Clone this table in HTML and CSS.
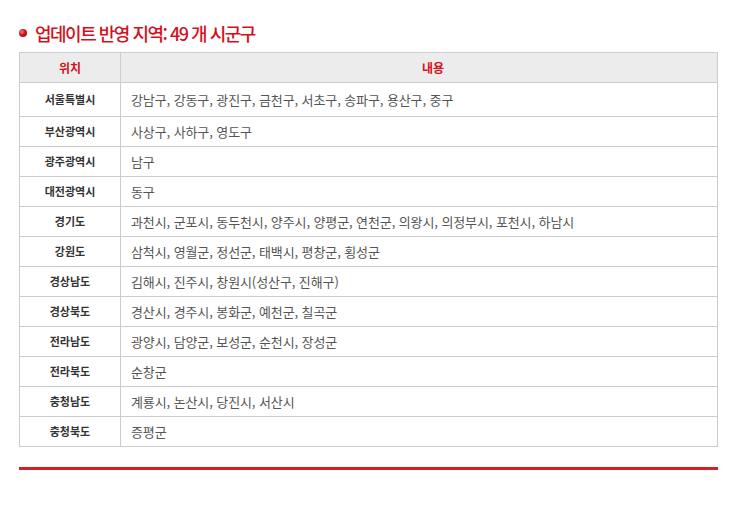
FILE: index.html
```html
<!DOCTYPE html>
<html lang="ko">
<head>
<meta charset="utf-8">
<link rel="stylesheet" href="styles.css">
</head>
<body>
<div class="wrap">
  <h2 class="title"><span class="dot"></span>업데이트 반영 지역: 49 개 시군구</h2>
  <table class="areas">
    <thead>
      <tr><th class="col-loc">위치</th><th class="col-desc">내용</th></tr>
    </thead>
    <tbody>
      <tr class="first"><td class="loc">서울특별시</td><td class="desc">강남구, 강동구, 광진구, 금천구, 서초구, 송파구, 용산구, 중구</td></tr>
      <tr><td class="loc">부산광역시</td><td class="desc">사상구, 사하구, 영도구</td></tr>
      <tr><td class="loc">광주광역시</td><td class="desc">남구</td></tr>
      <tr><td class="loc">대전광역시</td><td class="desc">동구</td></tr>
      <tr><td class="loc">경기도</td><td class="desc">과천시, 군포시, 동두천시, 양주시, 양평군, 연천군, 의왕시, 의정부시, 포천시, 하남시</td></tr>
      <tr><td class="loc">강원도</td><td class="desc">삼척시, 영월군, 정선군, 태백시, 평창군, 횡성군</td></tr>
      <tr><td class="loc">경상남도</td><td class="desc">김해시, 진주시, 창원시(성산구, 진해구)</td></tr>
      <tr><td class="loc">경상북도</td><td class="desc">경산시, 경주시, 봉화군, 예천군, 칠곡군</td></tr>
      <tr><td class="loc">전라남도</td><td class="desc">광양시, 담양군, 보성군, 순천시, 장성군</td></tr>
      <tr><td class="loc">전라북도</td><td class="desc">순창군</td></tr>
      <tr><td class="loc">충청남도</td><td class="desc">계룡시, 논산시, 당진시, 서산시</td></tr>
      <tr><td class="loc">충청북도</td><td class="desc">증평군</td></tr>
    </tbody>
  </table>
  <div class="endbar"></div>
</div>
</body>
</html>
```

FILE: styles.css
```css
html, body {
  margin: 0;
  padding: 0;
  background: #ffffff;
}

.wrap {
  width: 699px;
  padding: 22px 0 0 19px;
  font-family: "Noto Sans CJK KR", "Noto Sans", sans-serif;
}

.title {
  display: flex;
  align-items: center;
  margin: 0;
  height: 22px;
  font-size: 18px;
  line-height: 22px;
  font-weight: 500;
  letter-spacing: -1.5px;
  color: #d3101c;
}

.dot {
  display: inline-block;
  width: 8px;
  height: 8px;
  border-radius: 50%;
  margin-right: 8px;
  background: radial-gradient(circle at 35% 35%, #f27a7a 0%, #d3101c 45%, #8e0a10 100%);
}

.areas {
  margin-top: 8px;
  width: 699px;
  border-collapse: collapse;
  table-layout: fixed;
}

.areas th,
.areas td {
  border: 1px solid #cccccc;
}

.areas th {
  background: #ececec;
  color: #d3101c;
  font-size: 12px;
  font-weight: 700;
  line-height: 16px;
  padding: 7px 0 6px;
}

.col-loc {
  width: 100px;
}

.col-desc {
  padding-left: 28px !important;
}

.areas td {
  padding: 6px 10px;
  line-height: 17px;
}

.areas tr.first td {
  padding-top: 8px;
  padding-bottom: 8px;
}

.loc {
  text-align: center;
  font-size: 11px;
  font-weight: 700;
  color: #333333;
}

.desc {
  text-align: left;
  font-size: 13px;
  letter-spacing: -0.1px;
  color: #555555;
}

.endbar {
  margin-top: 20px;
  height: 3px;
  background: #d71e26;
}
```
